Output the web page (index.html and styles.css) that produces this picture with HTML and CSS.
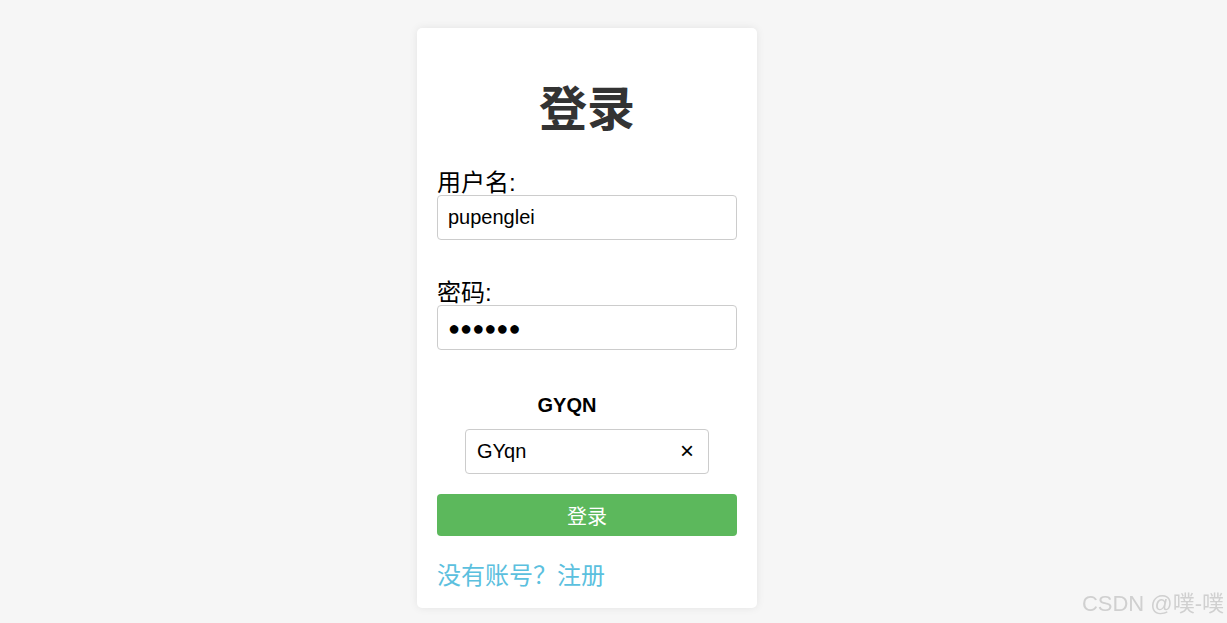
FILE: index.html
```html
<!DOCTYPE html>
<html lang="zh-CN">
<head>
<meta charset="utf-8">
<title>登录</title>
<link rel="stylesheet" href="styles.css">
</head>
<body>
<div class="page">
  <div class="card">
    <h1 class="title">登录</h1>
    <form class="form">
      <div class="group group-user">
        <label class="label" for="u">用户名:</label>
        <input class="input" id="u" type="text" value="pupenglei">
      </div>
      <div class="group group-pass">
        <label class="label" for="p">密码:</label>
        <input class="input input-pass" id="p" type="text" value="●●●●●●" readonly>
      </div>
      <div class="captcha">
        <div class="captcha-code">GYQN</div>
        <div class="captcha-field">
          <input class="captcha-input" type="text" value="GYqn">
          <span class="clear">×</span>
        </div>
      </div>
      <button class="btn" type="button">登录</button>
    </form>
    <div class="register"><a class="link" href="#">没有账号？注册</a></div>
  </div>
</div>
<div class="watermark">CSDN @噗-噗</div>
</body>
</html>
```

FILE: styles.css
```css
html, body {
  margin: 0;
  padding: 0;
  height: 100%;
}
body {
  background: #f6f6f6;
  font-family: "Liberation Sans", Arial, "Noto Sans CJK SC", sans-serif;
  color: #000;
}
.page {
  display: flex;
  justify-content: center;
  padding-top: 28px;
}
.card {
  width: 300px;
  padding: 20px 20px 20px;
  margin-right: 53px;
  background: #fff;
  border-radius: 5px;
  box-shadow: 0 0 8px rgba(0, 0, 0, 0.08);
}
.title {
  margin: 38px 0 0;
  font-size: 48px;
  line-height: 48px;
  font-weight: bold;
  color: #333;
  text-align: center;
}
.form {
  display: flex;
  flex-direction: column;
}
.group {
  display: flex;
  flex-direction: column;
}
.group-user { margin-top: 37px; }
.group-pass { margin-top: 41px; }
.label {
  font-size: 24px;
  line-height: 24px;
}
.input {
  box-sizing: border-box;
  width: 300px;
  height: 45px;
  margin: 0;
  padding: 0 10px;
  border: 1px solid #ccc;
  border-radius: 4px;
  font-family: "Liberation Sans", Arial, sans-serif;
  font-size: 20px;
  color: #000;
  outline: none;
}
.input-pass {
  font-family: "Liberation Sans", Arial, sans-serif;
  font-size: 20px;
  padding-top: 2px;
}
.captcha {
  display: flex;
  flex-direction: column;
  align-items: center;
  margin-top: 45px;
}
.captcha-code {
  font-size: 20px;
  line-height: 20px;
  font-weight: bold;
  margin-right: 40px;
}
.captcha-field {
  position: relative;
  margin-top: 14px;
}
.captcha-input {
  box-sizing: border-box;
  width: 244px;
  height: 45px;
  margin: 0;
  padding: 0 40px 0 11px;
  border: 1px solid #ccc;
  border-radius: 4px;
  font-family: "Liberation Sans", Arial, sans-serif;
  font-size: 20px;
  color: #000;
  outline: none;
}
.clear {
  position: absolute;
  right: 15px;
  top: 10px;
  font-size: 24px;
  line-height: 24px;
  color: #000;
}
.btn {
  margin-top: 20px;
  height: 42px;
  width: 300px;
  border: none;
  border-radius: 4px;
  background: #5cb85c;
  color: #fff;
  font-family: "Liberation Sans", Arial, "Noto Sans CJK SC", sans-serif;
  font-size: 20px;
}
.register {
  margin-top: 28px;
  font-size: 24px;
  line-height: 24px;
}
.link {
  color: #5bc0de;
  text-decoration: none;
}
.watermark {
  position: fixed;
  right: 3px;
  bottom: 6px;
  font-family: "Liberation Sans", Arial, "Noto Sans CJK SC", sans-serif;
  font-size: 22px;
  color: #d0d0d0;
}
```
